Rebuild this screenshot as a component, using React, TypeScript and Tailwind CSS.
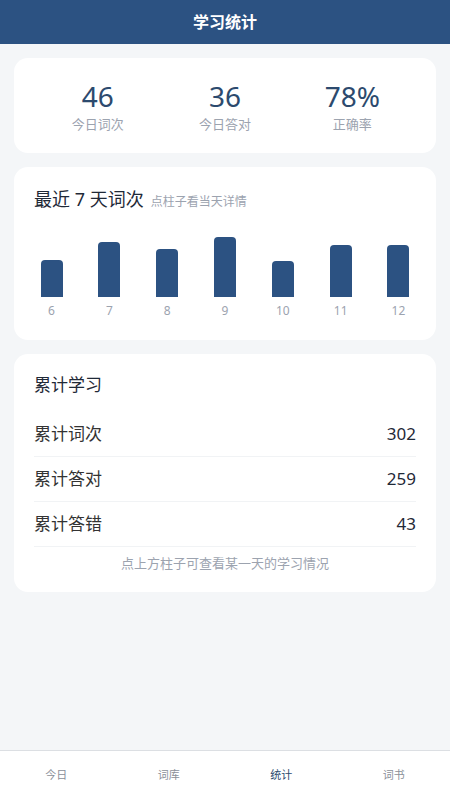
import React from "react";

const font = { fontFamily: '"Noto Sans", "Noto Sans CJK SC", sans-serif' };

const bars = [
  { d: "6", h: 37 },
  { d: "7", h: 55 },
  { d: "8", h: 48 },
  { d: "9", h: 60 },
  { d: "10", h: 36 },
  { d: "11", h: 52 },
  { d: "12", h: 52 },
];

const totals = [
  { k: "累计词次", v: "302" },
  { k: "累计答对", v: "259" },
  { k: "累计答错", v: "43" },
];

export default function App() {
  return (
    <div className="w-[450px] h-[800px] bg-[#f4f6f8] flex flex-col" style={font}>
      <div className="h-[44px] bg-[#2c5282] flex items-center justify-center shrink-0">
        <span className="text-white text-[16px] font-bold leading-none">学习统计</span>
      </div>

      <div className="flex-1 flex flex-col gap-[14px] px-[14px] pt-[14px]">
        <div className="bg-white rounded-[14px] h-[95px] px-5 grid grid-cols-3 items-center">
          {[
            ["46", "今日词次"],
            ["36", "今日答对"],
            ["78%", "正确率"],
          ].map(([n, l]) => (
            <div key={l} className="flex flex-col items-center pt-[2px]">
              <span className="text-[28px] leading-[32px] text-[#2c4a6e]">{n}</span>
              <span className="text-[13px] leading-[18px] text-[#9ca3af] mt-[3px]">{l}</span>
            </div>
          ))}
        </div>

        <div className="bg-white rounded-[14px] h-[173px] px-5 pt-[20px] flex flex-col">
          <div className="flex items-baseline gap-[7px]">
            <span className="text-[18px] leading-[24px] text-[#1f2937]">最近 7 天词次</span>
            <span className="text-[12px] leading-[16px] text-[#9ca3af]">点柱子看当天详情</span>
          </div>
          <div className="flex justify-between mt-[16px]">
            {bars.map((b) => (
              <div key={b.d} className="w-[35px] flex flex-col items-center">
                <div className="h-[70px] flex items-end">
                  <div className="w-[22px] bg-[#2c5282] rounded-t-[4px]" style={{ height: b.h }} />
                </div>
                <span className="text-[12px] leading-[16px] text-[#9ca3af] mt-[6px]">{b.d}</span>
              </div>
            ))}
          </div>
        </div>

        <div className="bg-white rounded-[14px] px-5 pt-[19px] pb-[20px] flex flex-col">
          <span className="text-[17px] leading-[24px] text-[#1f2937]">累计学习</span>
          <div className="mt-[15px] flex flex-col">
            {totals.map((t) => (
              <div key={t.k} className="flex justify-between items-center py-[10px] border-b border-[#f1f3f5]">
                <span className="text-[17px] leading-[24px] text-[#333333]">{t.k}</span>
                <span className="text-[17px] leading-[24px] text-[#1f2937]">{t.v}</span>
              </div>
            ))}
          </div>
          <span className="text-[13px] leading-[18px] text-[#9ca3af] text-center mt-[7px]">
            点上方柱子可查看某一天的学习情况
          </span>
        </div>
      </div>

      <div className="h-[50px] bg-white border-t border-[#dcdfe3] grid grid-cols-4 items-center shrink-0">
        {["今日", "词库", "统计", "词书"].map((t) => (
          <span
            key={t}
            className={
              "text-center text-[11px] " + (t === "统计" ? "text-[#2c4a6e]" : "text-[#8a8f98]")
            }
          >
            {t}
          </span>
        ))}
      </div>
    </div>
  );
}
